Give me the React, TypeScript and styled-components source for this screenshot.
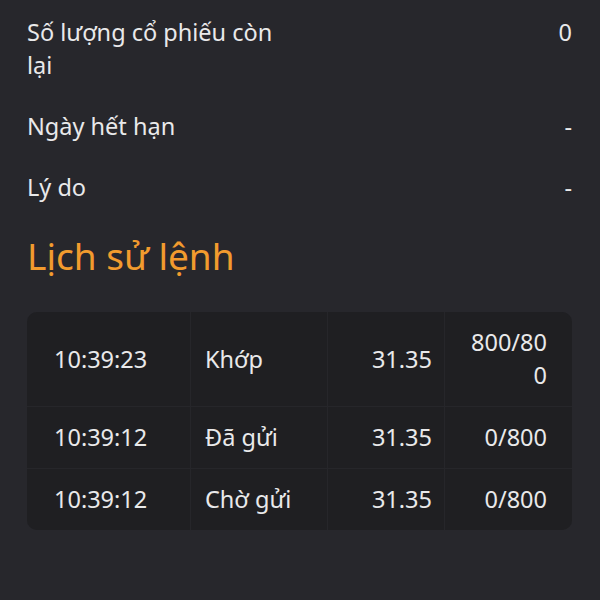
import React from "react";
import styled, { createGlobalStyle } from "styled-components";

const GlobalStyle = createGlobalStyle`
  body {
    margin: 0;
    background: #27272c;
    font-family: "Noto Sans", "Open Sans", sans-serif;
    color: #e9e9ea;
  }
`;

const Page = styled.div`
  padding: 16px 28px 40px 27px;
  display: flex;
  flex-direction: column;
`;

const InfoList = styled.div`
  display: flex;
  flex-direction: column;
  gap: 28px;
`;

const InfoRow = styled.div`
  display: flex;
  justify-content: space-between;
  align-items: flex-start;
  font-size: 23.5px;
  line-height: 33px;
`;

const Label = styled.div`
  width: 262px;
`;

const Value = styled.div`
  text-align: right;
`;

const Heading = styled.h2`
  margin: 28px 0 0;
  font-size: 37px;
  font-weight: 400;
  line-height: 48px;
  color: #f29b2e;
`;

const Table = styled.div`
  margin-top: 32px;
  display: grid;
  grid-template-columns: 163px 136px 116px 1fr;
  gap: 1px;
  background: #26262a;
  border-radius: 10px;
  overflow: hidden;
`;

const Cell = styled.div<{ $align?: "left" | "right"; $padL: number; $padR: number }>`
  background: #1f1f22;
  display: flex;
  align-items: center;
  justify-content: ${(p) => (p.$align === "right" ? "flex-end" : "flex-start")};
  text-align: ${(p) => p.$align ?? "left"};
  padding: 14px ${(p) => p.$padR}px 14px ${(p) => p.$padL}px;
  font-size: 23.5px;
  line-height: 33px;
  word-break: break-all;
`;

const info = [
  { label: "Số lượng cổ phiếu còn lại", value: "0" },
  { label: "Ngày hết hạn", value: "-" },
  { label: "Lý do", value: "-" },
];

const history = [
  { time: "10:39:23", status: "Khớp", price: "31.35", qty: "800/800" },
  { time: "10:39:12", status: "Đã gửi", price: "31.35", qty: "0/800" },
  { time: "10:39:12", status: "Chờ gửi", price: "31.35", qty: "0/800" },
];

export default function App() {
  return (
    <>
      <GlobalStyle />
      <Page>
        <InfoList>
          {info.map((r) => (
            <InfoRow key={r.label}>
              <Label>{r.label}</Label>
              <Value>{r.value}</Value>
            </InfoRow>
          ))}
        </InfoList>
        <Heading>Lịch sử lệnh</Heading>
        <Table>
          {history.map((h, i) => (
            <React.Fragment key={i}>
              <Cell $padL={27} $padR={8}>{h.time}</Cell>
              <Cell $padL={14} $padR={8}>{h.status}</Cell>
              <Cell $align="right" $padL={8} $padR={12}>{h.price}</Cell>
              <Cell $align="right" $padL={20} $padR={25}>{h.qty}</Cell>
            </React.Fragment>
          ))}
        </Table>
      </Page>
    </>
  );
}
